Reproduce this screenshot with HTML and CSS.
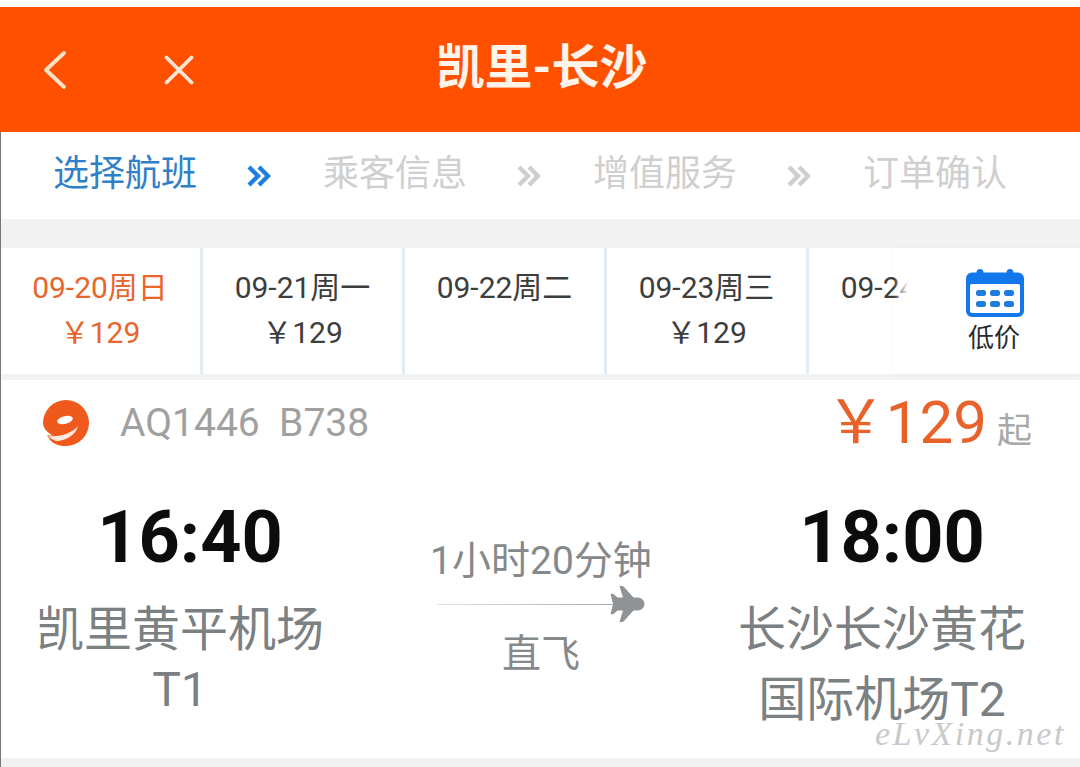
FILE: index.html
```html
<!DOCTYPE html>
<html lang="zh">
<head>
<meta charset="utf-8">
<title>凯里-长沙</title>
<link rel="stylesheet" href="styles.css">
</head>
<body>
<div class="page">
  <header class="topbar">
    <div class="top-icons">
      <svg class="ic-back" width="26" height="40" viewBox="0 0 26 40"><path d="M22 3 L4 20 L22 37" fill="none" stroke="#ffe0c8" stroke-width="3.800" stroke-linecap="round" stroke-linejoin="round"/></svg>
      <svg class="ic-close" width="30" height="30" viewBox="0 0 30 30"><path d="M2.500 2.500 L27.500 27.500 M27.500 2.500 L2.500 27.500" fill="none" stroke="#ffe6d6" stroke-width="3.800" stroke-linecap="round"/></svg>
    </div>
    <h1 class="title">凯里-长沙</h1>
  </header>

  <nav class="steps">
    <span class="step active">选择航班</span>
    <svg class="chev" width="24" height="24" viewBox="0 0 24 24"><path d="M2 3 L11 12 L2 21 M12 3 L21 12 L12 21" fill="none" stroke="#1f7fe0" stroke-width="4.400"/></svg>
    <span class="step">乘客信息</span>
    <svg class="chev" width="24" height="24" viewBox="0 0 24 24"><path d="M2 3 L11 12 L2 21 M12 3 L21 12 L12 21" fill="none" stroke="#cfcfcf" stroke-width="4.400"/></svg>
    <span class="step">增值服务</span>
    <svg class="chev" width="24" height="24" viewBox="0 0 24 24"><path d="M2 3 L11 12 L2 21 M12 3 L21 12 L12 21" fill="none" stroke="#cfcfcf" stroke-width="4.400"/></svg>
    <span class="step">订单确认</span>
  </nav>

  <section class="dates">
    <div class="date sel"><div>09-20周日</div><div class="dp">￥129</div></div>
    <div class="date"><div>09-21周一</div><div class="dp">￥129</div></div>
    <div class="date"><div>09-22周二</div></div>
    <div class="date"><div>09-23周三</div><div class="dp">￥129</div></div>
    <div class="date"><div>09-24周四</div></div>
    <div class="lowprice">
      <svg width="58" height="48" viewBox="0 0 58 48"><path d="M14 0a3.500 3.500 0 0 1 3.500 3.500h23a3.500 3.500 0 0 1 7 0H52a6 6 0 0 1 6 6V42a6 6 0 0 1-6 6H6a6 6 0 0 1-6-6V9.500a6 6 0 0 1 6-6h4.500A3.500 3.500 0 0 1 14 0z" fill="#1277ea"/><rect x="4" y="15" width="50" height="29" rx="2" fill="#fff"/><g fill="#1f7bdc"><rect x="10" y="21" width="10" height="6" rx="2.500"/><rect x="24" y="21" width="10" height="6" rx="2.500"/><rect x="38" y="21" width="10" height="6" rx="2.500"/><rect x="10" y="32" width="10" height="6" rx="2.500"/><rect x="24" y="32" width="10" height="6" rx="2.500"/><rect x="38" y="32" width="10" height="6" rx="2.500"/></g></svg>
      <span class="lp-text">低价</span>
    </div>
  </section>

  <section class="card">
    <div class="card-head">
      <div class="airline">
        <svg class="logo" width="46" height="46" viewBox="0 0 46 46"><path d="M23 0a23 23 0 0 1 0 46c-7 0-12-2-16-6l-3-5 6 1c-6-4-10-8-10-13A23 23 0 0 1 23 0z" fill="#ef5a1c"/><ellipse cx="22" cy="20" rx="8" ry="3.800" fill="#fff" transform="rotate(-14 22 20)"/><path d="M5 36 C15 37 27 35 35 26 C33 35 22 41 13 41 C10 40 7 38 5 36z" fill="#ffe9dd"/></svg>
        <span class="flight">AQ1446&nbsp; B738</span>
      </div>
      <div class="price"><span class="amount">￥129</span> <span class="from">起</span></div>
    </div>
    <div class="route">
      <div class="end dep">
        <div class="time">16:40</div>
        <div class="airport">凯里黄平机场</div>
        <div class="airport second-near">T1</div>
      </div>
      <div class="mid">
        <div class="dur">1小时20分钟</div>
        <div class="line">
          <span class="rule"></span>
          <svg class="plane" width="36" height="36" viewBox="0 0 36 36"><path d="M35.500 18c0-3.500-3-6.500-7-6.500H24.500L15 1c-.6-.7-1.300-1-2.200-1H10.500l3.500 11.500H8.500L5 8.500c-.6-.5-1.200-.7-2-.7H1.500L4 18 1.500 28.200H3c.8 0 1.400-.2 2-.7l3.500-3H14L10.500 36h2.300c.9 0 1.600-.3 2.200-1l9.500-10.500h4c4 0 7-3 7-6.500z" fill="#8f9395"/></svg>
        </div>
        <div class="direct">直飞</div>
      </div>
      <div class="end arr">
        <div class="time">18:00</div>
        <div class="airport">长沙长沙黄花</div>
        <div class="airport second-far">国际机场T2</div>
      </div>
    </div>
    <div class="watermark">eLvXing.net</div>
  </section>
</div>
</body>
</html>
```
FILE: styles.css
```css
* { box-sizing: border-box; }
html, body { margin: 0; padding: 0; }
body {
  width: 1080px;
  height: 767px;
  overflow: hidden;
  background: #f2f2f2;
  font-family: Roboto, "Noto Sans CJK SC", sans-serif;
}
.page {
  height: 767px;
  padding-top: 7px;
  background: linear-gradient(#fff 7px, #f2f2f2 7px);
  position: relative;
}
.page::before {
  content: "";
  position: absolute;
  left: 0;
  top: 132px;
  bottom: 0;
  width: 1px;
  background: #777;
  z-index: 3;
}
.topbar {
  height: 125px;
  background: #ff5000;
  display: flex;
  align-items: center;
  justify-content: center;
  position: relative;
}
.top-icons {
  position: absolute;
  left: 42px;
  top: 43px;
  display: flex;
  align-items: center;
  gap: 96px;
}
.title {
  margin: 0 0 4px 4px;
  color: #fff3ea;
  font-size: 48px;
  font-weight: 700;
  line-height: 60px;
}
.steps {
  height: 87px;
  background: #fff;
  display: flex;
  align-items: center;
  padding: 0 0 3px 53px;
}
.step {
  font-size: 36px;
  line-height: 44px;
  width: 144px;
  white-space: nowrap;
  color: #cfcfcf;
}
.step.active { color: #2f80c8; }
.chev { margin: 4px 52px 0 50px; flex: none; }
.dates {
  margin-top: 29px;
  height: 126px;
  background: #fff;
  display: flex;
  position: relative;
}
.date {
  flex: none;
  width: 202px;
  border-right: 3px solid #e3ebf3;
  padding-top: 22px;
  text-align: center;
  font-size: 30px;
  line-height: 36px;
  color: #3d3d3d;
  white-space: nowrap;
  overflow: hidden;
}
.date.sel { width: 203px; color: #e8652c; }
.date:last-of-type { border-right: 0; }
.dp { margin-top: 9px; }
.lowprice {
  position: absolute;
  left: 894px;
  right: 0;
  top: 0;
  bottom: 0;
  padding: 21px 0 0 14px;
  background: linear-gradient(90deg, rgba(255,255,255,0), #fff 14px);
  display: flex;
  flex-direction: column;
  align-items: center;
  box-shadow: 0 0 6px rgba(0,0,0,.035);
}
.lowprice svg { margin-left: 1px; }
.lp-text {
  font-size: 26px;
  line-height: 34px;
  margin-top: 4px;
  color: #2a2a2a;
}
.card {
  margin-top: 6px;
  height: 378px;
  background: #fff;
  position: relative;
}
.card-head {
  display: flex;
  justify-content: space-between;
  align-items: flex-start;
  padding: 9px 48px 0 43px;
  height: 90px;
}
.airline { display: flex; align-items: center; margin-top: 11px; }
.logo { flex: none; }
.flight {
  margin-left: 31px;
  font-size: 39px;
  line-height: 46px;
  color: #a0a0a0;
}
.price { white-space: nowrap; display: flex; align-items: baseline; }
.amount {
  font-size: 60px;
  line-height: 68px;
  color: #e8622a;
}
.from {
  font-size: 35px;
  color: #a8a8a8;
  margin-left: 10px;
}
.route { display: flex; align-items: flex-start; }
.end { flex: none; text-align: center; }
.dep { width: 360px; }
.arr { width: 320px; }
.time {
  margin-top: 26px;
  padding-left: 20px;
  font-size: 72px;
  line-height: 84px;
  font-weight: 700;
  color: #0c0c0c;
}
.airport {
  font-size: 48px;
  line-height: 48px;
  color: #7b8083;
  margin-top: 26px;
  white-space: nowrap;
}
.airport.second-near { margin-top: 12px; }
.airport.second-far { margin-top: 22px; }
.mid { width: 362px; text-align: center; color: #85898b; flex: none; }
.dur { font-size: 39px; line-height: 46px; margin-top: 68px; }
.line {
  display: flex;
  align-items: center;
  width: 208px;
  margin: 0 auto;
  height: 40px;
}
.rule {
  flex: 1;
  height: 1px;
  background: linear-gradient(90deg, #e2e2e2, #a9a9a9);
  margin-right: -8px;
}
.plane { flex: none; }
.direct { font-size: 39px; line-height: 46px; margin-top: 7px; }
.watermark {
  position: absolute;
  left: 875px;
  top: 342px;
  font-family: "Liberation Serif", serif;
  font-style: italic;
  font-size: 34px;
  line-height: 24px;
  letter-spacing: 2.500px;
  white-space: nowrap;
  color: #c9c9c9;
}
```
